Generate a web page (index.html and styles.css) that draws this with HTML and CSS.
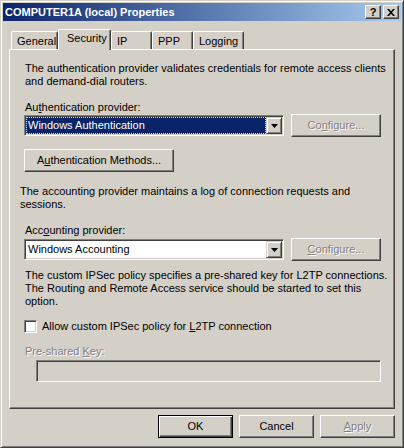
FILE: index.html
```html
<!DOCTYPE html>
<html>
<head>
<meta charset="utf-8">
<link rel="stylesheet" href="styles.css">
</head>
<body>
<div class="window">
  <div class="titlebar">
    <span class="title">COMPUTER1A (local) Properties</span>
    <div class="caps">
      <span class="capbtn"><span class="qmark">?</span></span>
      <span class="capbtn"><svg width="8" height="7" viewBox="0 0 8 7"><path d="M0 0h2l2 2.2L6 0h2L5 3.5 8 7H6L4 4.8 2 7H0l3-3.5z" fill="#000"/></svg></span>
    </div>
  </div>
  <div class="client">
    <div class="tabs">
      <div class="tab w-general">General</div>
      <div class="tab sel w-security">Security</div>
      <div class="tab w-ip">IP</div>
      <div class="tab w-ppp">PPP</div>
      <div class="tab w-log">Logging</div>
    </div>
    <div class="panel">
      <p class="txt">The authentication provider validates credentials for remote access clients<br>and demand-dial routers.</p>
      <p class="lbl">Au<u>t</u>hentication provider:</p>
      <div class="row">
        <div class="combo">
          <div class="field focus"><span>Windows Authentication</span></div>
          <div class="drop"><svg width="7" height="4" viewBox="0 0 7 4"><path d="M0 0h7L3.5 4z" fill="#000"/></svg></div>
        </div>
        <div class="btn disabled w-config">Co<u>n</u>figure...</div>
      </div>
      <div class="btn w-methods gap-methods">A<u>u</u>thentication Methods...</div>
      <p class="txt acct">The accounting provider maintains a log of connection requests and<br>sessions.</p>
      <p class="lbl">Acc<u>o</u>unting provider:</p>
      <div class="row row2">
        <div class="combo">
          <div class="field"><span>Windows Accounting</span></div>
          <div class="drop"><svg width="7" height="4" viewBox="0 0 7 4"><path d="M0 0h7L3.5 4z" fill="#000"/></svg></div>
        </div>
        <div class="btn disabled w-config"><u>C</u>onfigure...</div>
      </div>
      <p class="txt ipsec">The custom IPSec policy specifies a pre-shared key for L2TP connections.<br>The Routing and Remote Access service should be started to set this<br>option.</p>
      <div class="check">
        <span class="box"></span>
        <span class="checklbl">Allow custom IPSec policy for <u>L</u>2TP connection</span>
      </div>
      <p class="lbl disabled-text keylbl">Pre-shared <u>K</u>ey:</p>
      <div class="textbox"></div>
    </div>
    <div class="buttons">
      <div class="btn default w-dlg">OK</div>
      <div class="btn w-dlg">Cancel</div>
      <div class="btn disabled w-dlg"><u>A</u>pply</div>
    </div>
  </div>
</div>
</body>
</html>
```
FILE: styles.css
```css
html, body {
  margin: 0;
  padding: 0;
  background: #d4d0c8;
}
body {
  font-family: "Liberation Sans", Arial, sans-serif;
  font-size: 11px;
  line-height: 13px;
  color: #000;
}
.window {
  width: 404px;
  height: 448px;
  box-sizing: border-box;
  border: 1px solid;
  border-color: #d4d0c8 #404040 #404040 #d4d0c8;
  box-shadow: inset 1px 1px #fff, inset -1px -1px #808080;
  padding: 2px;
  background: #d4d0c8;
}
.titlebar {
  height: 18px;
  background: linear-gradient(to right, #0a246a, #a6caf0);
  display: flex;
  align-items: center;
  padding-left: 2px;
  color: #fff;
  font-weight: bold;
}
.title {
  white-space: nowrap;
}
.caps {
  margin-left: auto;
  margin-right: 2px;
  display: flex;
  gap: 2px;
}
.capbtn {
  width: 16px;
  height: 14px;
  box-sizing: border-box;
  background: #d4d0c8;
  border: 1px solid;
  border-color: #fff #404040 #404040 #fff;
  box-shadow: inset -1px -1px #808080;
  display: flex;
  align-items: center;
  justify-content: center;
}
.qmark {
  color: #000;
  font-weight: bold;
  font-size: 11px;
  line-height: 11px;
  margin-top: 1px;
}
.client {
  padding: 8px 6px 0 6px;
}
.tabs {
  height: 20px;
  display: flex;
  align-items: flex-end;
  padding-left: 2px;
}
.tab {
  height: 18px;
  box-sizing: border-box;
  border-top: 1px solid #fff;
  border-left: 1px solid #fff;
  border-right: 1px solid #404040;
  box-shadow: inset -1px 0 #808080;
  border-radius: 2px 2px 0 0;
  padding: 3px 0 0 5px;
  white-space: nowrap;
  background: #d4d0c8;
}
.tab.sel {
  height: 21px;
  margin-bottom: -1px;
  position: relative;
  z-index: 1;
  padding: 2px 0 0 8px;
}
.w-general { width: 47px; }
.w-security { width: 53px; }
.w-ip { width: 41px; }
.w-ppp { width: 41px; }
.w-log { width: 51px; }
.panel {
  height: 360px;
  box-sizing: border-box;
  border: 1px solid;
  border-color: #fff #404040 #404040 #fff;
  box-shadow: inset -1px -1px #808080;
  padding: 12px 0 0 14px;
}
.txt {
  margin: 0;
  padding-left: 1px;
  white-space: nowrap;
}
.txt.acct {
  margin-top: 13px;
  margin-left: -5px;
}
.txt.ipsec {
  margin-top: 8px;
}
.lbl {
  margin: 13px 0 0 0;
  padding-left: 1px;
  white-space: nowrap;
}
.row {
  display: flex;
  align-items: flex-end;
  gap: 7px;
  height: 23px;
}
.row2 {
  margin-top: 1px;
}
.combo {
  width: 260px;
  height: 21px;
  box-sizing: border-box;
  border: 1px solid;
  border-color: #808080 #fff #fff #808080;
  box-shadow: inset 1px 1px #404040, inset -1px -1px #d4d0c8;
  padding: 1px;
  display: flex;
  background: #fff;
  margin-bottom: 1px;
}
.field {
  flex: 1;
  display: flex;
  align-items: center;
  padding-left: 2px;
  white-space: nowrap;
  background: #fff;
}
.field.focus {
  background: #0a246a;
  color: #fff;
  outline: 1px dotted #e8e890;
  outline-offset: -1px;
}
.drop {
  width: 16px;
  height: 17px;
  box-sizing: border-box;
  background: #d4d0c8;
  border: 1px solid;
  border-color: #d4d0c8 #404040 #404040 #d4d0c8;
  box-shadow: inset 1px 1px #fff, inset -1px -1px #808080;
  display: flex;
  align-items: center;
  justify-content: center;
}
.btn {
  height: 23px;
  box-sizing: border-box;
  border: 1px solid;
  border-color: #fff #404040 #404040 #fff;
  box-shadow: inset -1px -1px #808080;
  background: #d4d0c8;
  display: flex;
  align-items: center;
  justify-content: center;
  white-space: nowrap;
}
.btn.disabled, .disabled-text {
  color: #808080;
  text-shadow: 1px 1px 0 #fff;
}
.btn.default {
  border: 1px solid #000;
  box-shadow: inset 1px 1px #fff, inset -1px -1px #404040, inset -2px -2px #808080;
}
.w-config { width: 90px; }
.w-methods { width: 150px; }
.gap-methods { margin-top: 12px; }
.w-dlg { width: 75px; }
.check {
  margin-top: 12px;
  display: flex;
  align-items: center;
  gap: 5px;
  height: 13px;
}
.box {
  width: 13px;
  height: 13px;
  box-sizing: border-box;
  border: 1px solid;
  border-color: #808080 #fff #fff #808080;
  box-shadow: inset 1px 1px #404040, inset -1px -1px #d4d0c8;
  background: #fff;
}
.checklbl {
  white-space: nowrap;
}
.keylbl {
  margin-top: 12px;
}
.textbox {
  margin: 2px 0 0 12px;
  width: 345px;
  height: 22px;
  box-sizing: border-box;
  border: 1px solid;
  border-color: #808080 #fff #fff #808080;
  box-shadow: inset 1px 1px #404040, inset -1px -1px #d4d0c8;
  background: #d4d0c8;
}
.buttons {
  margin-top: 6px;
  display: flex;
  justify-content: flex-end;
  gap: 6px;
}
```
